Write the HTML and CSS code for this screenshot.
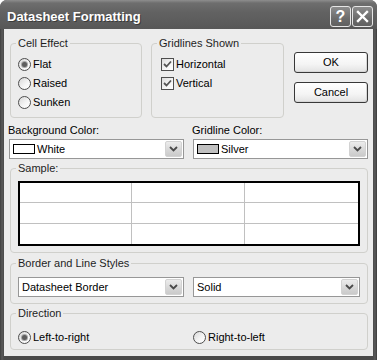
FILE: index.html
```html
<!DOCTYPE html>
<html>
<head>
<meta charset="utf-8">
<link rel="stylesheet" href="styles.css">
</head>
<body>
<div class="window">
  <div class="titlebar">
    <span class="title">Datasheet Formatting</span>
    <div class="tbtns">
      <span class="tbtn help">?</span>
      <span class="tbtn close"><svg width="13" height="13" viewBox="0 0 13 13"><path d="M2 2 L11 11 M11 2 L2 11" stroke="#fff" stroke-width="2.4" stroke-linecap="square"/></svg></span>
    </div>
  </div>
  <div class="client">
    <div class="toprow">
      <fieldset class="group cell">
        <legend>Cell Effect</legend>
        <div class="opt"><span class="radio on"></span>Flat</div>
        <div class="opt"><span class="radio"></span>Raised</div>
        <div class="opt"><span class="radio"></span>Sunken</div>
      </fieldset>
      <fieldset class="group grid">
        <legend>Gridlines Shown</legend>
        <div class="opt"><span class="check"><svg width="11" height="11" viewBox="0 0 11 11"><path d="M2 5 L4.5 7.5 L9 2.5" fill="none" stroke="#555" stroke-width="1.8"/></svg></span>Horizontal</div>
        <div class="opt"><span class="check"><svg width="11" height="11" viewBox="0 0 11 11"><path d="M2 5 L4.5 7.5 L9 2.5" fill="none" stroke="#555" stroke-width="1.8"/></svg></span>Vertical</div>
      </fieldset>
      <div class="buttons">
        <button class="btn">OK</button>
        <button class="btn">Cancel</button>
      </div>
    </div>
    <div class="colors">
      <div class="field">
        <div class="lbl">Background Color:</div>
        <div class="combo wide"><span class="swatch white"></span><span class="val">White</span><span class="arrow"><svg width="9" height="6" viewBox="0 0 9 6"><path d="M1 1 L4.5 4.5 L8 1" fill="none" stroke="#4a4a4a" stroke-width="1.8"/></svg></span></div>
      </div>
      <div class="field">
        <div class="lbl">Gridline Color:</div>
        <div class="combo wide"><span class="swatch silver"></span><span class="val">Silver</span><span class="arrow"><svg width="9" height="6" viewBox="0 0 9 6"><path d="M1 1 L4.5 4.5 L8 1" fill="none" stroke="#4a4a4a" stroke-width="1.8"/></svg></span></div>
      </div>
    </div>
    <fieldset class="group sample">
      <legend>Sample:</legend>
      <div class="sgrid">
        <div></div><div></div><div></div>
        <div></div><div></div><div></div>
        <div></div><div></div><div></div>
      </div>
    </fieldset>
    <fieldset class="group styles">
      <legend>Border and Line Styles</legend>
      <div class="srow">
        <div class="combo c1"><span class="val txt">Datasheet Border</span><span class="arrow"><svg width="9" height="6" viewBox="0 0 9 6"><path d="M1 1 L4.5 4.5 L8 1" fill="none" stroke="#4a4a4a" stroke-width="1.8"/></svg></span></div>
        <div class="combo c2"><span class="val txt">Solid</span><span class="arrow"><svg width="9" height="6" viewBox="0 0 9 6"><path d="M1 1 L4.5 4.5 L8 1" fill="none" stroke="#4a4a4a" stroke-width="1.8"/></svg></span></div>
      </div>
    </fieldset>
    <fieldset class="group direction">
      <legend>Direction</legend>
      <div class="drow">
        <div class="opt first"><span class="radio on"></span>Left-to-right</div>
        <div class="opt"><span class="radio"></span>Right-to-left</div>
      </div>
    </fieldset>
  </div>
</div>
</body>
</html>
```

FILE: styles.css
```css
* { box-sizing: border-box; }
html, body { margin: 0; padding: 0; }
body {
  width: 377px;
  height: 360px;
  overflow: hidden;
  background: #fff;
  font-family: "Liberation Sans", Arial, sans-serif;
  font-size: 11px;
  line-height: 13px;
  color: #000;
}
.window {
  width: 377px;
  height: 360px;
  display: flex;
  flex-direction: column;
  background: linear-gradient(90deg, #3e3e3e 0, #5a5a5a 2px, #4a4a4a 4px, #4a4a4a 373px, #5a5a5a 375px, #3a3a3a 377px);
  border-radius: 7px 7px 0 0;
}
.titlebar {
  height: 29px;
  flex: none;
  display: flex;
  align-items: center;
  justify-content: space-between;
  padding: 3px 4px 0 7px;
  background: linear-gradient(#8e8e8e 0, #6e6e6e 3px, #626262 12px, #5c5c5c 22px, #575757 29px);
  border-radius: 7px 7px 0 0;
  color: #fff;
}
.title {
  font-weight: bold;
  font-size: 13px;
  text-shadow: 1px 1px 0 #3a3a3a;
}
.tbtns { display: flex; gap: 1px; }
.tbtn {
  width: 21px;
  height: 21px;
  border: 1px solid #e6e6e6;
  border-radius: 3px;
  background: linear-gradient(#8c8c8c, #6c6c6c 60%, #606060);
  display: flex;
  align-items: center;
  justify-content: center;
  color: #fff;
  font-weight: bold;
  font-size: 16px;
}
.client {
  flex: 1;
  margin: 0 4px 4px 4px;
  background: #ececec;
  padding: 8px 5px 6px 6px;
  display: flex;
  flex-direction: column;
}
.group {
  margin: 0;
  min-width: 0;
  border: 1px solid #d0d0cc;
  border-radius: 4px;
}
.group legend {
  padding: 0 2px;
  margin-left: -2px;
  line-height: 13px;
  color: #1e1e1e;
}
.toprow { display: flex; }
.cell { width: 132px; margin-right: 9px; padding: 5px 7px 5px 7px; }
.grid { width: 133px; margin-right: 10px; padding: 5px 7px 5px 9px; }
.grid legend { margin-left: -4px; }
.opt { display: flex; align-items: center; height: 19px; white-space: nowrap; }
.radio {
  width: 13px;
  height: 13px;
  flex: none;
  border-radius: 50%;
  border: 1px solid #4e4e4e;
  background: linear-gradient(135deg, #d8d8d8, #f6f6f6 60%, #fff);
  margin-right: 2px;
  display: flex;
  align-items: center;
  justify-content: center;
}
.radio.on::after {
  content: "";
  width: 5px;
  height: 5px;
  border-radius: 50%;
  background: #5e5e5e;
  box-shadow: 0 0 0 1px #a8a8a8;
}
.check {
  width: 13px;
  height: 13px;
  flex: none;
  border: 1px solid #4e4e4e;
  background: linear-gradient(135deg, #dcdcdc, #f6f6f6 60%, #fff);
  margin-right: 2px;
  display: flex;
  align-items: center;
  justify-content: center;
}
.buttons { width: 74px; display: flex; flex-direction: column; padding-top: 15px; gap: 9px; }
.btn {
  height: 21px;
  margin: 0;
  padding: 0;
  border: 1px solid #383838;
  border-radius: 3px;
  background: linear-gradient(#ffffff, #f4f4f4 60%, #e2e2e2);
  font: inherit;
  color: #000;
  box-shadow: inset -1px -1px 0 #d6d6d6;
}
.colors { display: flex; gap: 8px; margin: 6px 0 0 -2px; }
.field { width: 176px; }
.lbl { height: 13px; }
.combo {
  height: 20px;
  display: flex;
  align-items: center;
  border: 1px solid #979797;
  background: #fff;
  padding: 1px;
}
.combo.wide { width: 175px; margin: 2px 0 0 1px; }
.swatch { width: 22px; height: 10px; border: 1px solid #000; margin-left: 2px; flex: none; }
.swatch.white { background: #fff; }
.swatch.silver { background: #c0c0c0; }
.val { margin-left: 2px; white-space: nowrap; }
.arrow {
  margin-left: auto;
  width: 17px;
  height: 16px;
  flex: none;
  border: 1px solid #d2d2d2;
  border-radius: 2px;
  background: linear-gradient(#ececec, #d6d6d6 60%, #cacaca);
  display: flex;
  align-items: center;
  justify-content: center;
}
.sample { margin-top: 3px; padding: 6px 7px 6px 7px; }
.sgrid {
  width: 342px;
  display: grid;
  grid-template-columns: 111px 112px 113px;
  grid-template-rows: 19px 20px 20px;
  gap: 1px;
  background: #c0c0c0;
  border: 2px solid #000;
}
.sgrid div { background: #fff; }
.styles { margin-top: 4px; padding: 7px 7px 6px 7px; }
.srow { display: flex; gap: 9px; }
.c1 { width: 166px; }
.c2 { width: 167px; }
.direction { margin-top: 3px; padding: 8px 7px 2px 7px; }
.drow { display: flex; }
.opt.first { width: 175px; }
```
